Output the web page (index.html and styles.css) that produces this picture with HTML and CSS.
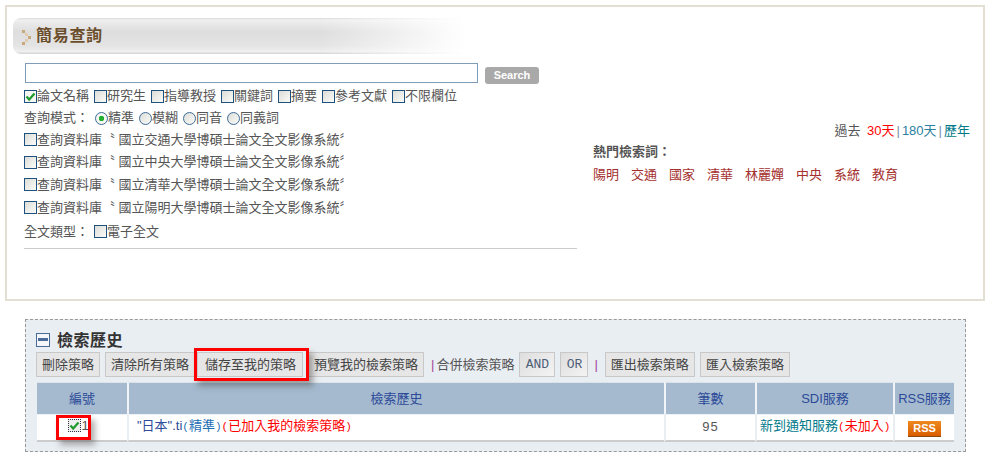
FILE: index.html
```html
<!DOCTYPE html>
<html lang="zh-Hant">
<head>
<meta charset="utf-8">
<title>簡易查詢</title>
<link rel="stylesheet" href="styles.css">
</head>
<body>
<section class="panel">
  <div class="left">
    <h2 class="title">
      <svg class="chev" width="10" height="16" viewBox="0 0 10 16"><g fill="#c9a87c"><rect x="0" y="0" width="3" height="3"/><rect x="3" y="3" width="3" height="3" fill="#e0cdb0"/><rect x="6" y="6" width="3" height="3"/><rect x="3" y="9" width="3" height="3" fill="#e0cdb0"/><rect x="0" y="12" width="3" height="3"/></g></svg>
      簡易查詢
    </h2>
    <div class="form">
      <div class="search"><input class="query" type="text" aria-label="查詢"><span class="go">Search</span></div>
      <div class="row fields">
        <label class="opt"><span class="cb on"><svg width="11" height="11" viewBox="0 0 11 11"><path d="M1.5 5.5 L4.2 8.5 L9.5 2.5" fill="none" stroke="#1f9a2c" stroke-width="2.2"/></svg></span>論文名稱</label>
        <label class="opt"><span class="cb"></span>研究生</label>
        <label class="opt"><span class="cb"></span>指導教授</label>
        <label class="opt"><span class="cb"></span>關鍵詞</label>
        <label class="opt"><span class="cb"></span>摘要</label>
        <label class="opt"><span class="cb"></span>參考文獻</label>
        <label class="opt"><span class="cb"></span>不限欄位</label>
      </div>
      <div class="row modes">
        <span class="lab">查詢模式：</span>
        <label class="opt"><span class="rd on"></span>精準</label>
        <label class="opt"><span class="rd"></span>模糊</label>
        <label class="opt"><span class="rd"></span>同音</label>
        <label class="opt"><span class="rd"></span>同義詞</label>
      </div>
      <div class="row db"><span class="cb"></span>查詢資料庫〝 國立交通大學博碩士論文全文影像系統〞</div>
      <div class="row db"><span class="cb"></span>查詢資料庫〝 國立中央大學博碩士論文全文影像系統〞</div>
      <div class="row db"><span class="cb"></span>查詢資料庫〝 國立清華大學博碩士論文全文影像系統〞</div>
      <div class="row db"><span class="cb"></span>查詢資料庫〝 國立陽明大學博碩士論文全文影像系統〞</div>
      <div class="row type"><span class="lab">全文類型：</span><span class="cb"></span>電子全文</div>
      <hr class="rule">
    </div>
  </div>
  <aside class="right">
    <div class="period">過去 <span class="red">30天</span><span class="bar">|</span><span class="t1">180天</span><span class="bar">|</span><span class="t2">歷年</span></div>
    <div class="hot-h">熱門檢索詞：</div>
    <div class="hot"><span>陽明</span><span>交通</span><span>國家</span><span>清華</span><span>林麗嬋</span><span>中央</span><span>系統</span><span>教育</span></div>
  </aside>
</section>

<section class="history">
  <h2 class="h-title"><span class="minus"></span>檢索歷史</h2>
  <div class="tools">
    <span class="btn">刪除策略</span>
    <span class="btn tuck">清除所有策略</span>
    <span class="btn marked">儲存至我的策略</span>
    <span class="btn">預覽我的檢索策略</span>
    <span class="sep">|</span><span class="lab combine">合併檢索策略</span>
    <span class="btn mono and">AND</span>
    <span class="btn mono or">OR</span>
    <span class="sep pipe2">|</span>
    <span class="btn">匯出檢索策略</span>
    <span class="btn">匯入檢索策略</span>
  </div>
  <table class="tbl">
    <thead>
      <tr><th class="c1">編號</th><th class="c2">檢索歷史</th><th class="c3">筆數</th><th class="c4">SDI服務</th><th class="c5">RSS服務</th></tr>
    </thead>
    <tbody>
      <tr>
        <td class="num"><span class="mark"><span class="cb2"><svg width="11" height="11" viewBox="0 0 11 11"><path d="M1.5 5.5 L4.2 8.5 L9.5 2.5" fill="none" stroke="#1f9a2c" stroke-width="2.2"/></svg></span>1</span></td>
        <td class="hist"><span class="q">"日本".ti</span><span class="b"><span class="par">(</span>精準<span class="par">)</span></span><span class="red"><span class="par">(</span>已加入我的檢索策略<span class="par">)</span></span></td>
        <td class="cnt">95</td>
        <td class="sdi"><span class="t2">新到通知服務</span><span class="red"><span class="par">(</span>未加入<span class="par">)</span></span></td>
        <td class="rss"><span class="rss-b">RSS</span></td>
      </tr>
    </tbody>
  </table>
</section>
</body>
</html>
```

FILE: styles.css
```css
html, body { margin: 0; padding: 0; background: #fff; }
body {
  width: 990px;
  height: 453px;
  overflow: hidden;
  padding: 5px 0 0 5px;
  box-sizing: border-box;
  font: 13px/1.2 "Liberation Sans", "Noto Sans CJK TC", sans-serif;
  color: #555;
}
.panel {
  box-sizing: border-box;
  width: 980px;
  height: 296px;
  border: 2px solid #e3e0d3;
  padding: 11px 13px 0 6px;
  display: flex;
}
.left { width: 564px; flex: none; }
.title {
  box-sizing: border-box;
  margin: 0;
  width: 452px;
  height: 36px;
  padding: 0 0 0 9px;
  display: flex;
  align-items: center;
  gap: 4px;
  font-size: 16px;
  font-weight: bold;
  letter-spacing: .7px;
  color: #6b4e2c;
  border-radius: 8px 0 0 8px;
  background:
    linear-gradient(90deg, rgba(255,255,255,0) 68%, #fff 100%),
    linear-gradient(#dadada 0, #f0f0f0 2px, #e8e8e8 6px, #dedede 14px, #e4e4e4 28px, #f0f0f0 34px, #d8d8d8 35px);
}
.chev { flex: none; margin-top: 3px; }
.form { padding: 9px 0 0 11px; }
.search { display: flex; align-items: flex-start; height: 22px; }
.query {
  box-sizing: border-box;
  width: 453px;
  height: 20px;
  margin: 0 0 0 1px;
  padding: 0;
  border: 1px solid #7f9db9;
  background: #fff;
}
.go {
  box-sizing: border-box;
  width: 54px;
  height: 17px;
  margin: 4px 0 0 7px;
  border-radius: 3px;
  background: #a9a9a9;
  color: #fff;
  font-size: 11px;
  font-weight: bold;
  line-height: 17px;
  text-align: center;
}
.row { display: flex; align-items: center; height: 22px; white-space: nowrap; }
.fields .opt { margin-right: 5px; }
.modes { margin-bottom: -1px; }
.modes .opt { margin-right: 4px; }
.lab { margin-right: 5px; }
.opt { display: flex; align-items: center; }
.cb {
  box-sizing: border-box;
  flex: none;
  width: 13px;
  height: 13px;
  display: flex;
  align-items: center;
  justify-content: center;
  border: 1px solid #1c5180;
  background: linear-gradient(135deg, #dcdcd7, #fbfbf9);
}
.cb.on { background: #f6f6f3; }
.rd {
  box-sizing: border-box;
  flex: none;
  width: 13px;
  height: 13px;
  margin-left: 1px;
  border: 1px solid #3d6c98;
  border-radius: 50%;
  background: linear-gradient(135deg, #dcdcd7, #fbfbf9);
}
.rd.on { background: radial-gradient(circle, #22b033 0 2.5px, #f6f6f3 3px); }
.db { height: 22.7px; }
.type { height: 24px; margin-top: 1px; }
.rule { margin: 4px 0 0; border: 0; border-top: 1px solid #ccc; width: 553px; }
.right { flex: 1; padding: 0 0 0 16px; }
.period { margin-top: 103px; text-align: right; line-height: 19px; }
.period .red { margin-left: 3px; }
.red { color: #f00; }
.bar { color: #7a8fa8; margin: 0 2px; }
.t1 { color: #2c7f9e; }
.t2 { color: #007a8a; }
.hot-h { margin-top: 3px; font-weight: bold; line-height: 18px; }
.hot { display: flex; gap: 12px; margin-top: 5px; color: #a4302f; line-height: 18px; }

.history {
  box-sizing: border-box;
  position: relative;
  width: 941px;
  height: 133px;
  margin: 18px 0 0 20px;
  padding: 10px 11px 0 10px;
  border: 1px dashed #999;
  background: #e9eef3;
}
.h-title {
  margin: 0;
  height: 22px;
  display: flex;
  align-items: center;
  font-size: 16px;
  font-weight: bold;
  letter-spacing: .5px;
  color: #333;
}
.minus {
  box-sizing: border-box;
  position: relative;
  width: 14px;
  height: 14px;
  margin: -3px 7px 0 0;
  border: 1px solid #4a6a9a;
  background: #f4f6fa;
}
.minus::after {
  content: "";
  position: absolute;
  left: 1px;
  right: 1px;
  top: 4px;
  height: 3px;
  background: #4a6a9a;
}
.tools { display: flex; align-items: center; height: 25px; white-space: nowrap; }
.btn {
  box-sizing: border-box;
  height: 25px;
  line-height: 23px;
  padding: 0 5px;
  margin-right: 5px;
  border: 1px solid #c8c8c8;
  background: #e6e6e6;
  color: #444;
}
.tuck { margin-right: 2px; }
.mono {
  padding: 0;
  text-align: center;
  font-family: "Liberation Mono", monospace;
  background: linear-gradient(135deg, #dedede, #f3f3f3);
  color: #4f5f78;
}
.and { width: 36px; }
.or { width: 28px; margin-right: 6px; }
.sep { color: #a4489a; margin: 0 2px; }
.combine { margin-right: 5px; }
.pipe2 { margin: 0 7px 0 0; }
.marked { position: relative; padding: 0 6px 0 7px; }
.marked::after {
  content: "";
  position: absolute;
  left: -4px;
  top: -5px;
  width: 109px;
  height: 27px;
  border: 3px solid #f00;
  box-shadow: 4px 5px 6px rgba(80, 80, 80, .5);
}
.tbl {
  border-collapse: separate;
  border-spacing: 0;
  margin: 5px 0 0 1px;
  table-layout: fixed;
  width: 917px;
}
.tbl th {
  height: 31px;
  padding: 0;
  background: #a5bacf;
  border-top: 1px solid #dde3ea;
  border-left: 2px solid #f0f3f7;
  font-weight: normal;
  color: #2c4a98;
  box-sizing: content-box;
}
.tbl th:first-child, .tbl td:first-child { border-left: 0; }
.c1 { width: 90px; }
.c2 { width: 535px; }
.c3 { width: 89px; }
.c4 { width: 136px; }
.c5 { width: 59px; white-space: nowrap; }
.tbl td {
  height: 23px;
  padding: 0 0 2px;
  background: #fff;
  border-top: 1px solid #eef1f5;
  border-left: 2px solid #e9eef3;
  border-bottom: 2px solid #ccc;
  white-space: nowrap;
}
.tbl .num { text-align: center; padding-right: 7px; }
.mark { position: relative; display: inline-flex; align-items: center; }
.mark::after {
  content: "";
  position: absolute;
  left: -12px;
  top: -3px;
  width: 29px;
  height: 19px;
  border: 3px solid #f00;
  box-shadow: 4px 5px 6px rgba(80, 80, 80, .45);
}
.cb2 {
  box-sizing: border-box;
  width: 13px;
  height: 13px;
  display: flex;
  align-items: center;
  justify-content: center;
  border: 1px dotted #334;
  background: #eee;
}
.tbl .hist { padding-left: 8px; }
.q { color: #2c4a98; }
.b { color: #1f6fb5; }
.par { font-family: "Liberation Mono", monospace; font-size: 11px; }
.cnt { text-align: center; letter-spacing: 1px; }
.tbl .sdi { padding-left: 3px; }
.tbl .rss { text-align: center; padding: 0; }
.rss-b {
  display: inline-block;
  width: 33px;
  height: 15px;
  line-height: 15px;
  font-size: 11px;
  font-weight: bold;
  color: #fff;
  text-align: center;
  background: linear-gradient(#ee8a1f, #d95c00);
  box-shadow: 0 1px 0 #8a4a10;
  vertical-align: middle;
}
```
